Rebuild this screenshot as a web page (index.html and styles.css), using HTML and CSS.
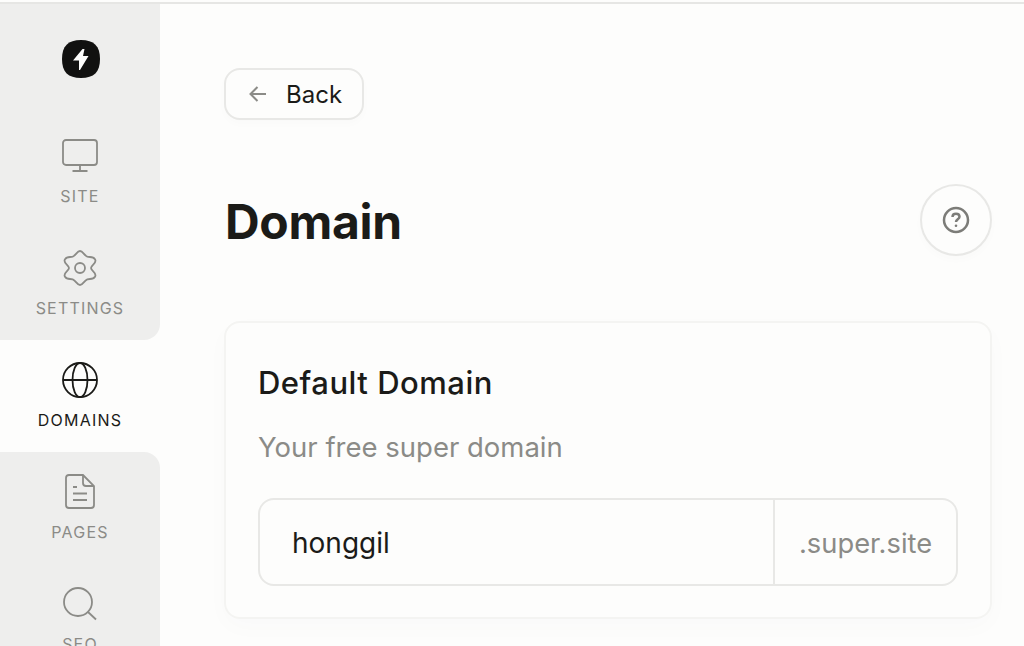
FILE: index.html
```html
<!DOCTYPE html>
<html lang="en">
<head>
    <meta charset="UTF-8">
    <title>Domain</title>
    <link rel="stylesheet" href="styles.css">
</head>
<body>
    <div class="app">
        <!-- Left navigation -->
        <nav class="sidebar">
            <div class="logo-row">
                <svg class="logo" width="40" height="40" viewBox="0 0 40 40">
                    <path d="M20 1C33 1 39 7 39 20C39 33 33 39 20 39C7 39 1 33 1 20C1 7 7 1 20 1Z" fill="#111110"/>
                    <path d="M21.500 10L12 21.500H18L18 31H19L27.500 17H22L23.500 10Z" fill="#fdfdfc"/>
                </svg>
            </div>
            <a class="nav-item">
                <svg class="nav-icon" viewBox="0 0 36 36">
                    <rect x="1" y="2" width="34" height="25" rx="3"/>
                    <path d="M18 27V33M10.500 33H25.500"/>
                </svg>
                <span>SITE</span>
            </a>
            <a class="nav-item before-active">
                <svg class="nav-icon" viewBox="0 0 36 36">
                    <circle cx="18" cy="18" r="5"/>
                    <path d="M18 1C21 1 22 5.500 25.300 6.700C28 7.500 31 6 33 9.300C35.500 13 29 15 29 18C29 21 35.500 23 33 26.700C31 30 28 28.500 25.300 29.300C22 30.500 21 35 18 35C15 35 14 30.500 10.700 29.300C8 28.500 5 30 3 26.700C.5 23 7 21 7 18C7 15 .5 13 3 9.300C5 6 8 7.500 10.700 6.700C14 5.500 15 1 18 1Z"/>
                </svg>
                <span>SETTINGS</span>
            </a>
            <a class="nav-item active">
                <svg class="nav-icon" viewBox="0 0 36 36">
                    <circle cx="18" cy="18" r="17"/>
                    <ellipse cx="18" cy="18" rx="7.500" ry="17"/>
                    <path d="M1 18H35"/>
                </svg>
                <span>DOMAINS</span>
            </a>
            <a class="nav-item after-active">
                <svg class="nav-icon" viewBox="0 0 36 36">
                    <path d="M7 1H21L32 12V31C32 33 31 34 29 34H7C5 34 4 33 4 31V4C4 2 5 1 7 1Z"/>
                    <path d="M21 1V9C21 11 22 12 24 12H32M11 13H15M11 19.500H25M11 26H25"/>
                </svg>
                <span>PAGES</span>
            </a>
            <a class="nav-item">
                <svg class="nav-icon" viewBox="0 0 36 36">
                    <circle cx="16" cy="16" r="14"/>
                    <path d="M26 26L34 33.500"/>
                </svg>
                <span>SEO</span>
            </a>
        </nav>

        <main class="content">
            <button class="back-btn">
                <svg width="20" height="20" viewBox="0 0 20 20">
                    <path d="M18 10H3M9.500 3L2.500 10L9.500 17"/>
                </svg>
                <span>Back</span>
            </button>

            <div class="page-head">
                <h1>Domain</h1>
                <button class="help-btn">
                    <svg width="28" height="28" viewBox="0 0 28 28">
                        <circle cx="14" cy="14" r="12"/>
                        <path d="M10.500 11C10.500 9 12 7.800 14 7.800C16 7.800 17.500 9 17.500 10.800C17.500 13.200 14 13.500 14 16"/>
                        <circle class="dot" cx="14" cy="19.800" r="1.300"/>
                    </svg>
                </button>
            </div>

            <section class="card">
                <h2>Default Domain</h2>
                <p>Your free super domain</p>
                <div class="domain-field">
                    <span class="domain-name">honggil</span>
                    <span class="domain-suffix">.super.site</span>
                </div>
            </section>
        </main>
    </div>
</body>
</html>
```

FILE: styles.css
```css
* {
    box-sizing: border-box;
    margin: 0;
    padding: 0;
}

html, body {
    height: 646px;
    overflow: hidden;
}

body {
    font-family: 'Inter', 'Liberation Sans', sans-serif;
    background: #fdfdfc;
    color: #1b1b18;
}

.app {
    display: flex;
    height: 644px;
    margin-top: 2px;
    border-top: 2px solid #e6e6e4;
}

/* Sidebar */
.sidebar {
    flex: 0 0 160px;
    height: 672px;
    display: flex;
    flex-direction: column;
}

.logo-row {
    height: 112px;
    display: flex;
    justify-content: center;
    padding-top: 35px;
    background: #eeeeed;
}

.logo {
    margin-left: 1px;
}

.nav-item {
    height: 112px;
    flex: none;
    display: flex;
    flex-direction: column;
    align-items: center;
    padding-top: 22px;
    background: #eeeeed;
    color: #8b8b87;
    font-size: 16px;
    letter-spacing: 1.2px;
    line-height: 20px;
}

.nav-item span {
    margin-top: 12px;
}

.nav-icon {
    width: 36px;
    height: 36px;
    fill: none;
    stroke: #8b8b87;
    stroke-width: 1.800;
}

.nav-item.before-active {
    border-bottom-right-radius: 16px;
}

.nav-item.after-active {
    border-top-right-radius: 16px;
}

.nav-item.active {
    background: #fdfdfc;
    color: #1b1b18;
}

.nav-item.active .nav-icon {
    stroke: #1b1b18;
}

/* Main content */
.content {
    flex: 1;
    padding: 64px 32px 0 64px;
}

.back-btn {
    display: flex;
    align-items: center;
    gap: 18px;
    width: 140px;
    height: 52px;
    padding: 0 0 0 22px;
    background: #fdfdfc;
    border: 2px solid #e8e8e6;
    border-radius: 16px;
    box-shadow: 0 4px 8px rgba(20, 30, 60, 0.015);
    font-family: inherit;
    font-size: 24px;
    color: #1b1b18;
}

.back-btn svg {
    fill: none;
    stroke: #8b8b87;
    stroke-width: 2;
}

.page-head {
    display: flex;
    justify-content: space-between;
    align-items: center;
    margin-top: 64px;
}

.page-head h1 {
    font-size: 48px;
    font-weight: 700;
    letter-spacing: -0.3px;
    padding: 2px 0 0 1px;
}

.help-btn {
    display: flex;
    align-items: center;
    justify-content: center;
    width: 72px;
    height: 72px;
    background: #fdfdfc;
    border: 2px solid #e8e8e6;
    border-radius: 50%;
    box-shadow: 0 4px 8px rgba(20, 30, 60, 0.015);
}

.help-btn svg {
    fill: none;
    stroke: #7c7c78;
    stroke-width: 2.500;
}

.help-btn .dot {
    fill: #7c7c78;
    stroke: none;
}

.card {
    margin-top: 65px;
    height: 298px;
    padding: 42px 32px 0;
    border: 2px solid #f4f4f2;
    border-radius: 16px;
    box-shadow: 0 8px 24px rgba(20, 40, 80, 0.02);
}

.card h2 {
    font-size: 31px;
    font-weight: 500;
    letter-spacing: 0.5px;
    line-height: 36px;
}

.card p {
    margin-top: 30px;
    font-size: 27.500px;
    line-height: 32px;
    color: #8b8b87;
}

.domain-field {
    display: flex;
    height: 88px;
    margin-top: 35px;
    border: 2px solid #e8e8e6;
    border-radius: 16px;
    font-size: 28px;
}

.domain-name {
    flex: 1;
    display: flex;
    align-items: center;
    padding: 2px 0 0 32px;
    border-right: 2px solid #e8e8e6;
}

.domain-suffix {
    display: flex;
    align-items: center;
    width: 181px;
    padding: 2px 0 0 24px;
    font-size: 27.300px;
    color: #8b8b87;
}
```
